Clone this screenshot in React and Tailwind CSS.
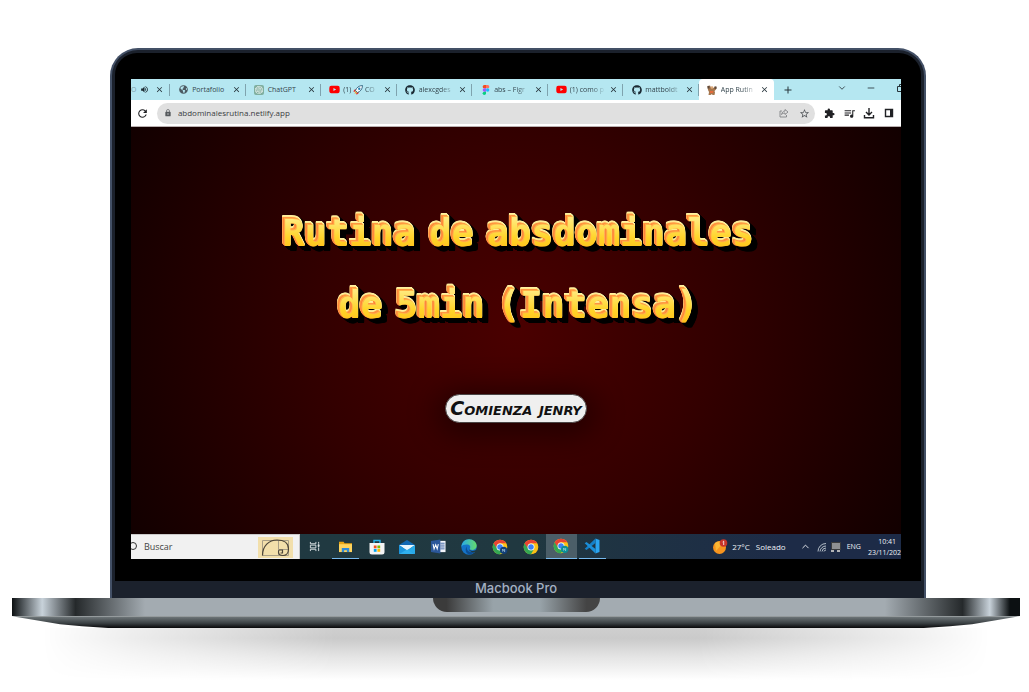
import React from "react";
import { FaYoutube, FaGithub, FaGlobeAmericas } from "react-icons/fa";
import { SiOpenai } from "react-icons/si";
import {
  MdExtension,
  MdQueueMusic,
  MdStarBorder,
  MdLock,
  MdRefresh,
  MdVolumeUp,
  MdClose,
  MdAdd,
} from "react-icons/md";
import { ChevronDown, ChevronUp, Minus } from "lucide-react";

function Figma() {
  return (
    <svg viewBox="0 0 20 30" className="h-[10px] w-[8px]">
      <path d="M5 0h5v10H5A5 5 0 0 1 5 0z" fill="#f24e1e" />
      <path d="M10 0h5a5 5 0 0 1 0 10h-5z" fill="#ff7262" />
      <path d="M5 10h5v10H5a5 5 0 0 1 0-10z" fill="#a259ff" />
      <circle cx="15" cy="15" r="5" fill="#1abcfe" />
      <path d="M5 20h5v5a5 5 0 1 1-5-5z" fill="#0acf83" />
    </svg>
  );
}

function Rocket() {
  return (
    <svg viewBox="0 0 20 20" className="inline h-[10px] w-[10px]">
      <path d="M6 8L2 10l-1 4 4-1zM12 14l-2 4-4 1 1-4z" fill="#e5342b" />
      <path d="M5 11C7 5 12 1 19 1c0 7-4 12-10 14z" fill="#f4f7f9" stroke="#1f5675" strokeWidth="1.6" />
      <circle cx="12.5" cy="7.5" r="2.4" fill="#2787b8" />
      <path d="M5 12l3 3-5 3z" fill="#f5a623" />
    </svg>
  );
}

function Lifter() {
  return (
    <svg viewBox="0 0 20 20" className="h-[10px] w-[10px]">
      <path d="M1 2l5-1 2 4 5 1 3-3 3 1-1 5-3 3 1 3-1 5h-4l-1-2-3 2H3l1-6-2-4z" fill="#a5764d" />
      <circle cx="10" cy="5" r="2.6" fill="#dca878" />
      <path d="M1 2h4v5H1zM15 3h4v5h-4z" fill="#5d4a3e" />
      <path d="M6 12h7l-1 4H6z" fill="#e36a3b" />
    </svg>
  );
}

function TabShell({ icon, children, closeLabel, active = false, fades = true }) {
  return (
    <div
      className={
        active
          ? "flex min-w-0 items-center rounded-t-[4px] bg-white pr-[5px] pl-2"
          : "flex min-w-0 items-center pl-2"
      }
    >
      <span className="flex w-[11px] shrink-0 items-center justify-center">{icon}</span>
      <span
        className={
          fades
            ? "ml-[3px] min-w-0 flex-1 whitespace-nowrap [mask-image:linear-gradient(to_right,black_60%,transparent_98%)]"
            : "ml-[3px] min-w-0 flex-1 whitespace-nowrap"
        }
      >
        {children}
      </span>
      <button type="button" aria-label={closeLabel} className="ml-[3px] shrink-0">
        <MdClose className="h-[9px] w-[9px] text-[#26333a]" />
      </button>
      {!active && <span className="ml-1 h-3 w-px shrink-0 bg-[#7fa3ae]" />}
    </div>
  );
}

const youtube = <FaYoutube className="h-[11px] w-[11px] text-[#ff0000]" />;
const github = <FaGithub className="h-[10px] w-[10px] text-[#1b2a33]" />;

const tabs = [
  {
    id: "portafolio",
    icon: <FaGlobeAmericas className="h-[9px] w-[9px] text-[#4c5a62]" />,
    text: "Portafolio",
    fades: false,
  },
  {
    id: "chatgpt",
    icon: (
      <span className="flex h-[10px] w-[10px] items-center justify-center rounded-[2px] bg-[#7fae9f]">
        <SiOpenai className="h-2 w-2 text-white" />
      </span>
    ),
    text: "ChatGPT",
    fades: false,
  },
  { id: "video1", icon: youtube, text: <>(1) <Rocket /> CO</>, fades: true },
  { id: "github1", icon: github, text: "alexcgdes", fades: true },
  { id: "figma", icon: <Figma />, text: "abs – Figr", fades: true },
  { id: "video2", icon: youtube, text: "(1) como p", fades: true },
  { id: "github2", icon: github, text: "mattboldt", fades: true },
];

function TabStrip() {
  return (
    <div className="grid h-[21px] shrink-0 grid-cols-[minmax(0,13fr)_repeat(8,minmax(0,25fr))_minmax(0,42fr)] bg-[#b5e7f1] text-[7px] leading-[12px] text-[#34454d]">
      <div className="flex items-center justify-between overflow-hidden">
        <span className="w-[4px] text-[#7fa0aa]">O</span>
        <MdVolumeUp className="h-[9px] w-[9px] text-[#1d2b32]" />
        <button type="button" aria-label="Cerrar pestaña">
          <MdClose className="h-[9px] w-[9px] text-[#26333a]" />
        </button>
        <span className="h-3 w-px bg-[#7fa3ae]" />
      </div>
      {tabs.map((t) => (
        <TabShell key={t.id} icon={t.icon} fades={t.fades} closeLabel="Cerrar pestaña">
          {t.text}
        </TabShell>
      ))}
      <TabShell icon={<Lifter />} closeLabel="Cerrar pestaña" active>
        App Rutin
      </TabShell>
      <div className="flex items-center overflow-hidden text-[#27343a]">
        <button type="button" aria-label="Nueva pestaña" className="flex w-7 shrink-0 justify-center">
          <MdAdd className="h-3 w-3" />
        </button>
        <div className="ml-[25px] flex shrink-0 pb-1">
          <button type="button" aria-label="Buscar pestañas" className="flex w-[29px] justify-center">
            <ChevronDown className="h-[10px] w-[10px]" strokeWidth={2} />
          </button>
          <button type="button" aria-label="Minimizar" className="flex w-[29px] justify-center">
            <Minus className="h-[10px] w-[10px]" strokeWidth={2} />
          </button>
          <button type="button" aria-label="Restaurar" className="flex w-[29px] justify-center">
            <svg viewBox="0 0 10 10" className="h-[10px] w-[10px]" fill="none" stroke="currentColor">
              <path d="M2.5 3.5h5v5h-5zM4.5 3V1.500h5v5H8" />
            </svg>
          </button>
        </div>
      </div>
    </div>
  );
}

function Toolbar() {
  return (
    <div className="flex h-[27px] shrink-0 items-center border-b border-[#b9b0b0] bg-white text-[#202124]">
      <button type="button" aria-label="Recargar" className="flex w-[26px] justify-center pr-[2px]">
        <MdRefresh className="h-[13px] w-[13px]" />
      </button>
      <div className="flex h-[21px] min-w-0 flex-1 items-center rounded-full bg-[#e0e0e0] pr-px pl-[7px]">
        <MdLock className="h-2 w-2 shrink-0 text-[#55595d]" />
        <input
          type="text"
          aria-label="Dirección"
          defaultValue="abdominalesrutina.netlify.app"
          className="ml-[6px] min-w-0 flex-1 bg-transparent text-[8px] leading-[12px] text-[#3a3c3f] outline-none"
        />
        <button type="button" aria-label="Compartir" className="flex w-5 justify-center">
          <svg viewBox="0 0 20 20" className="h-[10px] w-[10px]" fill="none" stroke="#77797c" strokeWidth="1.6">
            <path d="M6 6H2v12h13v-4" />
            <path d="M12 3l6 5-6 5v-3c-3 0-5 1-7 3 1-4 3-7 7-7z" />
          </svg>
        </button>
        <button type="button" aria-label="Favoritos" className="flex w-5 justify-center">
          <MdStarBorder className="h-[11px] w-[11px] text-[#55595d]" />
        </button>
      </div>
      <div className="flex items-center pr-[2px] pl-1">
        <button type="button" aria-label="Extensiones" className="flex w-5 justify-center">
          <MdExtension className="h-[11px] w-[11px]" />
        </button>
        <button type="button" aria-label="Multimedia" className="flex w-5 justify-center">
          <MdQueueMusic className="h-[13px] w-[13px]" />
        </button>
        <button type="button" aria-label="Descargas" className="flex w-5 justify-center">
          <svg viewBox="0 0 12 12" className="h-3 w-3" fill="none" stroke="currentColor" strokeWidth="1.400">
            <path d="M6 1v6.500M3 5l3 3 3-3M1.500 8v2.800h9V8" />
          </svg>
        </button>
        <button type="button" aria-label="Panel lateral" className="flex w-5 justify-center">
          <svg viewBox="0 0 10 10" className="h-[10px] w-[10px]">
            <path d="M1.500 1.500h7v7h-7z" fill="none" stroke="currentColor" strokeWidth="1.4" />
            <path d="M6 1h3v8H6z" fill="currentColor" />
          </svg>
        </button>
      </div>
    </div>
  );
}

function TitleLine({ text }) {
  const words = text.split(" ");
  return (
    <span className="flex justify-center gap-x-[13px] [filter:drop-shadow(-1px_-1px_0_#ffb347)_drop-shadow(-1px_0_0_#ff8138)_drop-shadow(-1px_-1px_0_#ff9440)_drop-shadow(0_-1px_0_#ffe98c)_drop-shadow(0_-1px_0_#fff0a0)_drop-shadow(2px_2px_0_#000)_drop-shadow(2px_2px_0_#000)_drop-shadow(2px_1px_0_#000)]">
      {words.map((w, i) => (
        <React.Fragment key={w}>
          <span className="bg-[linear-gradient(to_bottom,#ffe97a_30%,#ffd42a_55%,#ffc21a_72%)] bg-clip-text text-transparent">
            {w}
          </span>
          {i < words.length - 1 ? " " : null}
        </React.Fragment>
      ))}
    </span>
  );
}

function RoutinePage() {
  return (
    <main className="flex min-h-0 flex-1 flex-col items-center bg-[radial-gradient(circle,#4a0000_0%,#330000_45%,#120000_100%)] pt-[71px]">
      <h1 className="pl-[5px] font-['DejaVu_Sans_Mono',monospace] text-[37px] leading-[72px] font-bold">
        <TitleLine text="Rutina de absdominales" />
        <TitleLine text="de 5min (Intensa)" />
      </h1>
      <button
        type="button"
        className="mt-[52px] h-[29px] rounded-full border border-[#4a4545] bg-[#efefef] px-1 font-['DejaVu_Sans',sans-serif] text-[19px] leading-[27px] font-bold text-[#111] italic shadow-[0_4px_30px_8px_rgba(0,0,0,0.45)] [font-variant-caps:small-caps]"
      >
        Comienza jenry
      </button>
    </main>
  );
}

function Chrome({ badge }) {
  return (
    <svg viewBox="0 0 48 48" className="h-4 w-4">
      <circle cx="24" cy="24" r="22" fill="#fbc116" />
      <path d="M4.900 13A22 22 0 0 0 24 46l9.500-16.500L24 24z" fill="#34a853" />
      <path d="M4.900 13A22 22 0 0 1 43.100 13H24a11 11 0 0 0-9.500 16.500z" fill="#ea4335" />
      <circle cx="24" cy="24" r="10.500" fill="#fff" />
      <circle cx="24" cy="24" r="8.300" fill="#3b82f6" />
      {badge && <circle cx="35" cy="34" r="11" fill={badge} />}
      {badge && <path d="M32 38v-8l6 8v-8" fill="none" stroke="#b9dcea" strokeWidth="2" />}
    </svg>
  );
}

const apps = [
  {
    label: "Vista de tareas",
    icon: (
      <svg viewBox="0 0 12 12" className="h-[11px] w-[11px]" fill="none" stroke="#dfe6e8">
        <path d="M1.500 1v2h6V1M1.500 11V9h6v2M1.500 4.500h6v3h-6zM10.500 1v2M10.500 7v4" />
        <path d="M10 4h1v2h-1z" fill="#fff" />
      </svg>
    ),
  },
  {
    label: "Explorador de archivos",
    state: "open",
    icon: (
      <svg viewBox="0 0 16 14" className="h-[13px] w-[15px]">
        <path d="M1 2h5l1 1.500h8V13H1z" fill="#e9a514" />
        <path d="M1 4.500h14V13H1z" fill="#ffd45e" />
        <path d="M4 13V8.500h8V13h-2.500v-2h-3v2z" fill="#2f8ad8" />
      </svg>
    ),
  },
  {
    label: "Microsoft Store",
    icon: (
      <svg viewBox="0 0 16 16" className="h-4 w-4">
        <path d="M5 5V1.500h6V5" fill="none" stroke="#27b3e8" strokeWidth="1.400" />
        <path d="M0.500 4h15v9a2.500 2.500 0 0 1-2.500 2.500H3A2.500 2.500 0 0 1 .5 13z" fill="#f4f4f4" />
        <path d="M4.800 6.500h2.800v2.800H4.800z" fill="#f25022" />
        <path d="M8.400 6.500h2.800v2.800H8.400z" fill="#7fba00" />
        <path d="M4.800 10h2.800v2.800H4.800z" fill="#00a4ef" />
        <path d="M8.400 10h2.800v2.800H8.400z" fill="#ffb900" />
      </svg>
    ),
  },
  {
    label: "Correo",
    icon: (
      <svg viewBox="0 0 16 14" className="h-[14px] w-4">
        <path d="M0 5l8-5 8 5v9H0z" fill="#1268b3" />
        <path d="M0 5h16l-8 5.500z" fill="#e8f5fc" />
        <path d="M0 5l8 5.500L0 14z" fill="#1c95dc" />
        <path d="M16 5l-8 5.500L16 14z" fill="#28aae9" />
        <path d="M0 14l8-4.500 8 4.500z" fill="#30b0ee" />
      </svg>
    ),
  },
  {
    label: "Word",
    icon: (
      <svg viewBox="0 0 16 16" className="h-[15px] w-[15px]">
        <path d="M9 2h6.500v12H9z" fill="#f3f5fa" />
        <path d="M10 4.500h4.500M10 6.500h4.500M10 8.500h4.500M10 10.500h4.500" stroke="#2b579a" strokeWidth="0.900" />
        <path d="M0 2.200L10 .5v15L0 13.800z" fill="#2b579a" />
        <path d="M2.200 5.500l1.100 5L5 6l1.600 4.500 1.200-5" fill="none" stroke="#fff" strokeWidth="1.100" />
      </svg>
    ),
  },
  {
    label: "Edge",
    icon: (
      <svg viewBox="0 0 16 16" className="h-4 w-4">
        <defs>
          <linearGradient id="edgeTop" x1="0" x2="1">
            <stop offset="0" stopColor="#2aa9e8" />
            <stop offset="1" stopColor="#64dc6a" />
          </linearGradient>
        </defs>
        <circle cx="8" cy="8" r="7.700" fill="#1473c8" />
        <path d="M.3 8C1 3 4 .3 8 .3c4.500 0 7.700 3 7.700 6.500 0 2.500-2 4.200-4.500 4.200-2 0-2.700-.8-2.300-1.500.7-1 .6-3.700-2.400-4C3.500 5.300 1 6 .3 8z" fill="url(#edgeTop)" />
        <path d="M6.200 7c-1.500 3 1 7 5.800 5.700 1-.3 2-.7 2.500-1.100-1 2-3 3.600-6 4.100C4.500 14.500 3.500 10 6.200 7z" fill="#0d4e94" />
        <path d="M7.800 8.500c-.6 1.800.8 3.400 3.600 3.400 1.700 0 3.400-.6 4.400-1.700v2.300c-3 1.500-8.500.8-8-4z" fill="#203a42" />
      </svg>
    ),
  },
  { label: "Chrome N", icon: <Chrome badge="#123f78" /> },
  { label: "Chrome", icon: <Chrome /> },
  { label: "Chrome J", state: "active", icon: <Chrome badge="#0b8f97" /> },
  {
    label: "Visual Studio Code",
    state: "open",
    icon: (
      <svg viewBox="0 0 16 16" className="h-4 w-4">
        <path d="M11.500.5L15.500 2v12l-4 1.500z" fill="#2aa4f0" />
        <path d="M11.500.5V5L2.500 12 .7 10.700z" fill="#1580c8" />
        <path d="M11.500 15.500V11L2.500 4 .7 5.300z" fill="#1b8fd9" />
      </svg>
    ),
  },
];

const appStyles = {
  active: "flex items-center justify-center border-b border-[#76b9ed] bg-[#4b5e68]",
  open: "mx-[2px] flex items-center justify-center border-b border-[#76b9ed]",
  idle: "flex items-center justify-center",
};

function Taskbar() {
  return (
    <footer className="flex h-[25px] shrink-0 overflow-hidden bg-[linear-gradient(to_right,#203a42_0%,#203840_50%,#1d2b47_85%)] text-[8px] leading-[11px] whitespace-nowrap text-[#edf1f5]">
      <label className="flex w-[21.9%] shrink-0 items-center overflow-hidden border-t border-r border-[#c9c9c9] bg-[#f1f1f1] pr-[6px]">
        <svg viewBox="0 0 6 12" className="h-3 w-[6px] shrink-0" fill="none" stroke="#333">
          <circle cx="2" cy="5" r="3.500" />
        </svg>
        <input
          type="search"
          aria-label="Buscar"
          placeholder="Buscar"
          className="ml-[7px] min-w-0 flex-1 bg-transparent text-[9px] leading-[12px] outline-none placeholder:text-[#444]"
        />
        <svg viewBox="0 0 35 21" className="h-[21px] w-[35px] shrink-0">
          <path d="M0 0h35v21H0z" fill="#f2dfab" />
          <path d="M4.500 3.500h26v15h-26zM20.500 3.500v15M20.500 12.500h10" fill="none" stroke="#a99f86" />
          <path d="M4.500 18.500C4.500 9 11 3 19 3c7 0 11.500 3 11.500 9 0 4-2.500 6.500-5.500 6.500-2.500 0-4.500-1-4.500-3.500 0-1.500.5-2 1-2h3v3h-2" fill="none" stroke="#4b4438" strokeWidth="1.200" />
        </svg>
      </label>
      <nav className="grid w-[40%] shrink-0 grid-cols-10">
        {apps.map((a) => (
          <button type="button" key={a.label} aria-label={a.label} className={appStyles[a.state || "idle"]}>
            {a.icon}
          </button>
        ))}
      </nav>
      <div className="ml-auto flex w-[189px] shrink-0 items-center overflow-hidden">
        <svg viewBox="0 0 16 16" className="h-4 w-4 shrink-0">
          <circle cx="7.500" cy="8.500" r="6.500" fill="#f7941e" />
          <path d="M3 4a6.500 6.500 0 0 1 8 0L4 12z" fill="#fbb733" />
          <circle cx="11.500" cy="4" r="3.800" fill="#c9352b" />
          <path d="M10.700 3l1-.8V6" fill="none" stroke="#fff" strokeWidth="0.800" />
        </svg>
        <span className="ml-1">27°C</span>
        <span className="ml-[6px]">Soleado</span>
        <ChevronUp className="ml-[14px] h-[11px] w-[11px] shrink-0" strokeWidth={2} />
        <svg viewBox="0 0 10 10" className="ml-[6px] h-[10px] w-[10px] shrink-0" fill="none" stroke="#c5ced6" strokeWidth="0.900">
          <path d="M1 9.500A8 8 0 0 1 9 1.500M3 9.500a6 6 0 0 1 6-5.500M5 9.500a4 4 0 0 1 4-3.500M7 9.500a2 2 0 0 1 2-1.500" />
        </svg>
        <svg viewBox="0 0 10 10" className="ml-1 h-[10px] w-[10px] shrink-0">
          <path d="M.5.5h9v7h-9z" fill="#8e9092" stroke="#3b3c3d" />
          <path d="M0 8h3v2H0zM6 8h3v2H6z" fill="#b2b4b6" />
        </svg>
        <span className="ml-[6px] text-[7px]">ENG</span>
        <span className="ml-auto shrink-0 text-right text-[7px]">
          <span className="pr-[5px]">10:41</span>
          <br />
          23/11/202
        </span>
      </div>
    </footer>
  );
}

export default function App() {
  return (
    <div className="min-h-screen overflow-hidden bg-white pt-12 pr-[9px] pl-3 font-['Open_Sans',sans-serif]">
      <div className="flex justify-center pl-1">
        <div className="w-[81.3%] rounded-t-[28px] border-2 border-b-0 border-[#435066] bg-[#1b212c] px-[3px] pt-[3px]">
          <div className="rounded-t-[22px] bg-black pt-[26px] pr-5 pb-[22px] pl-4">
            <div className="flex aspect-[770/480] flex-col overflow-hidden">
              <TabStrip />
              <Toolbar />
              <RoutinePage />
              <Taskbar />
            </div>
          </div>
          <p className="h-[17px] pr-1 text-center font-[Inter,sans-serif] text-[13px] leading-[15px] font-medium text-[#a3b0c2]">
            Macbook Pro
          </p>
        </div>
      </div>
      <div className="flex h-[18px] justify-center bg-[linear-gradient(to_right,#0c1012_0%,#c8d2da_3%,#25292b_6.3%,#a3abb1_13.2%,#a3abb1_86.6%,#25292b_94.3%,#c8d2da_97%,#0c1012_99%)]">
        <div className="h-[14px] w-[167px] rounded-b-[14px] bg-[linear-gradient(to_right,#3b3b3b_8%,#98a3a9_36%,#98a3a9_64%,#444_92%)]" />
      </div>
      <div className="h-3 bg-[linear-gradient(to_bottom,#757d80,#3a4043_60%,#08080a)] [clip-path:polygon(0_0,100%_0,calc(100%-24px)_4px,calc(100%-48px)_8px,calc(100%-70px)_10px,calc(100%-100px)_12px,100px_12px,70px_10px,48px_8px,24px_4px)]" />
      <div className="h-[52px] bg-[linear-gradient(to_bottom,#cfcfcf,#cacaca_20%,#e4e4e4_55%,#fff)] [mask-image:linear-gradient(to_right,transparent_3%,rgba(0,0,0,0.35)_12%,black_32%,black_68%,rgba(0,0,0,0.35)_88%,transparent_97%)]" />
    </div>
  );
}
